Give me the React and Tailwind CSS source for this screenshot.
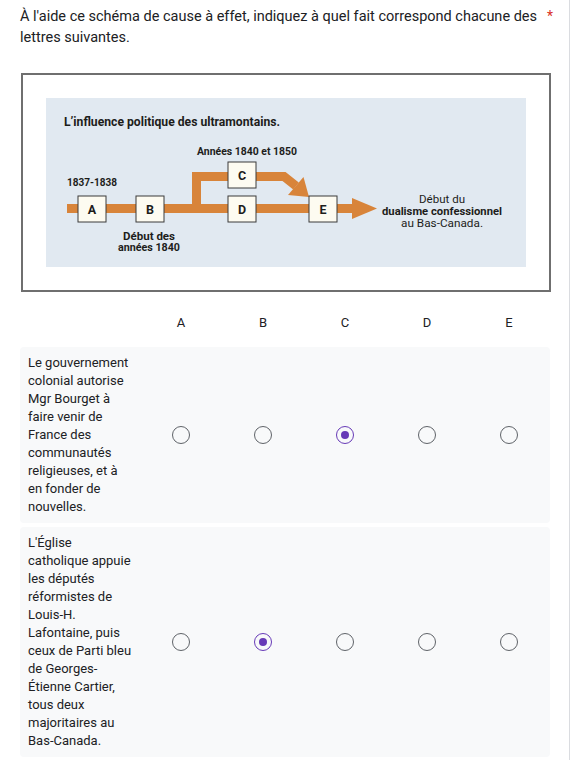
import { useState } from 'react';

const letters = ['A', 'B', 'C', 'D', 'E'];

const rows = [
  {
    id: 'r1',
    text: "Le gouvernement colonial autorise Mgr Bourget à faire venir de France des communautés religieuses, et à en fonder de nouvelles.",
  },
  {
    id: 'r2',
    text: "L'Église catholique appuie les députés réformistes de Louis-H. Lafontaine, puis ceux de Parti bleu de Georges-Étienne Cartier, tous deux majoritaires au Bas-Canada.",
  },
];

function Box({ x, y, label }) {
  return (
    <g>
      <rect x={x} y={y} width="28" height="26" fill="#fdfbf1" stroke="#3b3b3b" strokeWidth="1" />
      <text x={x + 14} y={y + 17.5} textAnchor="middle" fontSize="12.5" fontWeight="700" fill="#1d1d1b">
        {label}
      </text>
    </g>
  );
}

function Diagram() {
  return (
    <svg width="480" height="169" viewBox="0 0 480 169" className="block" style={{ fontFamily: 'Roboto, sans-serif' }}>
      <text x="18" y="28" fontSize="13.5" fontWeight="700" fill="#1d1d1b" textLength="216" lengthAdjust="spacingAndGlyphs">
        L’influence politique des ultramontains.
      </text>
      <text x="151" y="57" fontSize="11" fontWeight="700" fill="#1d1d1b" textLength="100" lengthAdjust="spacingAndGlyphs">
        Années 1840 et 1850
      </text>
      <text x="21" y="88" fontSize="11" fontWeight="700" fill="#1d1d1b" textLength="50" lengthAdjust="spacingAndGlyphs">
        1837-1838
      </text>

      {/* upper branch */}
      <polyline points="150.5,112 150.5,78.5 238,78.5 250,88" fill="none" stroke="#d8843a" strokeWidth="9" strokeLinejoin="miter" />
      <polygon points="263,99 242,97 257.5,79" fill="#d8843a" />

      {/* main line */}
      <rect x="21" y="106" width="286" height="9" fill="#d8843a" />
      <polygon points="306,100 331,110.5 306,121" fill="#d8843a" />

      <Box x={32} y={98} label="A" />
      <Box x={90} y={98} label="B" />
      <Box x={182} y={64} label="C" />
      <Box x={182} y={98} label="D" />
      <Box x={263} y={98} label="E" />

      <text x="103" y="141.5" textAnchor="middle" fontSize="10.5" fontWeight="700" fill="#1d1d1b" textLength="52" lengthAdjust="spacingAndGlyphs">
        Début des
      </text>
      <text x="103" y="153" textAnchor="middle" fontSize="10.5" fontWeight="700" fill="#1d1d1b" textLength="62" lengthAdjust="spacingAndGlyphs">
        années 1840
      </text>

      <text x="396" y="105" textAnchor="middle" fontSize="11" fill="#1d1d1b" textLength="46" lengthAdjust="spacingAndGlyphs">
        Début du
      </text>
      <text x="396" y="117" textAnchor="middle" fontSize="11" fontWeight="700" fill="#1d1d1b" textLength="120" lengthAdjust="spacingAndGlyphs">
        dualisme confessionnel
      </text>
      <text x="396" y="129" textAnchor="middle" fontSize="11" fill="#1d1d1b" textLength="82" lengthAdjust="spacingAndGlyphs">
        au Bas-Canada.
      </text>
    </svg>
  );
}

function Radio({ checked, onClick }) {
  return (
    <button
      type="button"
      onClick={onClick}
      className={`w-[18px] h-[18px] rounded-full border-[1.5px] flex items-center justify-center ${checked ? 'border-[#673ab7]' : 'border-[#5f6368]'}`}
    >
      {checked && <span className="w-2 h-2 rounded-full bg-[#673ab7]"></span>}
    </button>
  );
}

export default function App() {
  const [answers, setAnswers] = useState({ r1: 'C', r2: 'B' });

  return (
    <div className="w-[570px] min-h-[760px] bg-white border-r border-[#dadce0] font-['Roboto',sans-serif] text-[#202124]">
      <div className="flex pl-5 pt-[6px]">
        <p className="w-[521px] text-[14.5px] leading-[21px]">
          À l'aide ce schéma de cause à effet, indiquez à quel fait correspond chacune des lettres suivantes.
        </p>
        <span className="pl-[6px] text-[14px] leading-[21px] text-[#d93025]">*</span>
      </div>

      <div className="ml-[21px] mt-[25px] w-[530px] border-2 border-[#6f6f6f] p-[23px]">
        <div className="bg-[#e1e9f1] w-[480px] h-[169px]">
          <Diagram />
        </div>
      </div>

      <div className="ml-5 mt-[7px] flex h-12 items-center text-[13px]">
        <div className="w-[120px]"></div>
        {letters.map((l) => (
          <div key={l} className="w-[82px] text-center">{l}</div>
        ))}
      </div>

      <div className="ml-5 w-[530px] flex flex-col gap-1">
        {rows.map((row) => (
          <div key={row.id} className="flex items-center rounded bg-[#f8f9fa]">
            <div className="w-[120px] pl-2 pr-[7px] py-[7px] text-[13px] leading-[18px]">{row.text}</div>
            {letters.map((l) => (
              <div key={l} className="w-[82px] flex justify-center">
                <Radio checked={answers[row.id] === l} onClick={() => setAnswers({ ...answers, [row.id]: l })} />
              </div>
            ))}
          </div>
        ))}
      </div>
    </div>
  );
}
